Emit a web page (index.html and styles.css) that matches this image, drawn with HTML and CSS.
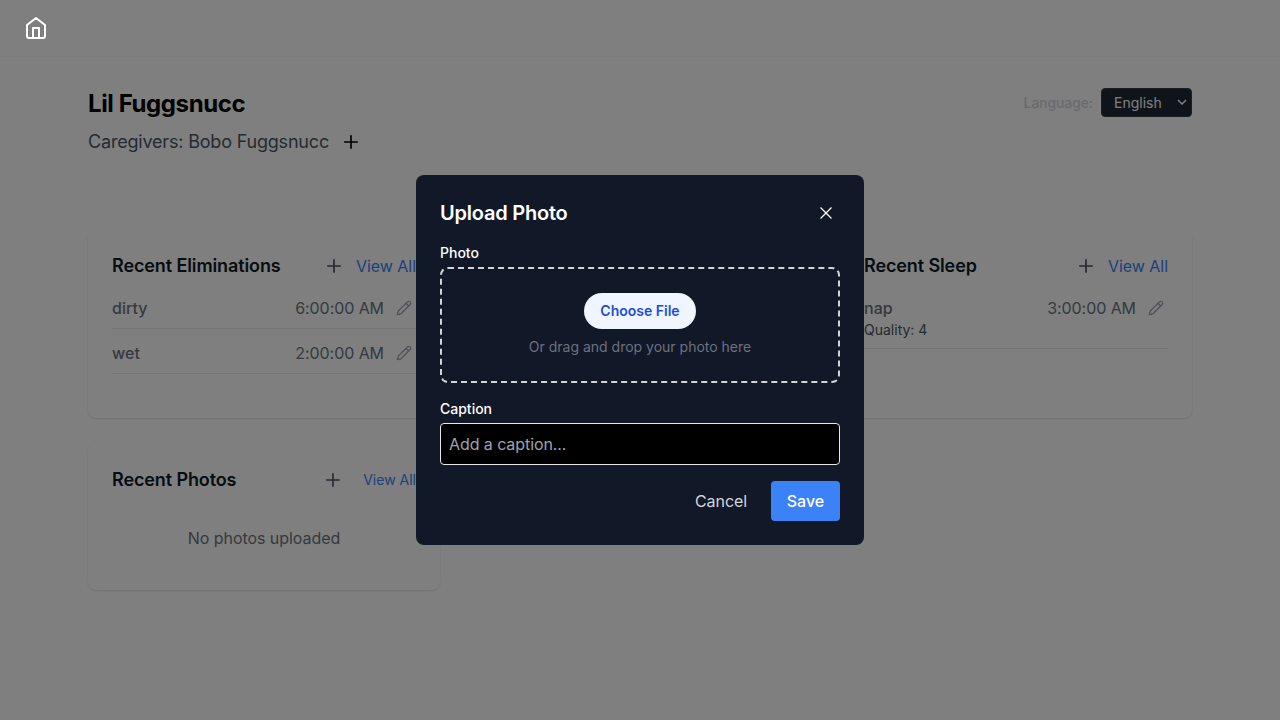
FILE: index.html
```html
<!DOCTYPE html>
<html lang="en">
<head>
<meta charset="utf-8">
<title>Lil Fuggsnucc</title>
<link rel="stylesheet" href="styles.css">
</head>
<body>
<svg width="0" height="0" class="defs">
  <symbol id="plus" viewBox="0 0 24 24"><path d="M4.5 12h15M12 4.5v15"/></symbol>
  <symbol id="pencil" viewBox="0 0 24 24"><path d="M21.174 6.812a1 1 0 0 0-3.986-3.987L3.842 16.174a2 2 0 0 0-.5.83l-1.321 4.352a.5.5 0 0 0 .623.622l4.353-1.32a2 2 0 0 0 .83-.497zM15 5l4 4"/></symbol>
</svg>
<header class="topbar"></header>
<main class="page">
  <div class="head">
    <div>
      <h1>Lil Fuggsnucc</h1>
      <p class="care"><span>Caregivers: Bobo Fuggsnucc</span> <svg class="icon i20 black"><use href="#plus"/></svg></p>
    </div>
    <div class="lang"><span>Language:</span>
      <div class="select">English <svg class="chev" viewBox="0 0 10 6"><path d="M1 1l4 4 4-4"/></svg></div>
    </div>
  </div>
  <div class="grid">
    <section class="card">
      <div class="card-head"><h2>Recent Eliminations</h2><div class="actions"><svg class="icon i20"><use href="#plus"/></svg><a>View All</a></div></div>
      <div class="row"><span class="kind">dirty</span><div class="when">6:00:00 AM <svg class="icon i16"><use href="#pencil"/></svg></div></div>
      <div class="row"><span class="kind">wet</span><div class="when">2:00:00 AM <svg class="icon i16"><use href="#pencil"/></svg></div></div>
    </section>
    <section class="card"></section>
    <section class="card">
      <div class="card-head"><h2>Recent Sleep</h2><div class="actions"><svg class="icon i20"><use href="#plus"/></svg><a>View All</a></div></div>
      <div class="row"><div><span class="kind">nap</span><p class="quality">Quality: 4</p></div><div class="when">3:00:00 AM <svg class="icon i16"><use href="#pencil"/></svg></div></div>
    </section>
    <section class="card photos">
      <div class="card-head"><h2>Recent Photos</h2><div class="actions"><svg class="icon i20"><use href="#plus"/></svg><a>View All</a></div></div>
      <p class="empty">No photos uploaded</p>
    </section>
  </div>
</main>
<div class="overlay">
  <div class="modal">
    <div class="modal-head"><h3>Upload Photo</h3><svg class="close" viewBox="0 0 12 12"><path d="M.5.5l11 11M11.5.5l-11 11"/></svg></div>
    <div class="label">Photo</div>
    <div class="drop"><button class="choose">Choose File</button><p>Or drag and drop your photo here</p></div>
    <div class="label caption">Caption</div>
    <input class="input" placeholder="Add a caption...">
    <div class="buttons"><button class="cancel">Cancel</button><button class="save">Save</button></div>
  </div>
</div>
<a class="home"><svg class="icon i24" viewBox="0 0 24 24"><path d="M3 9 12 2l9 7v11a2 2 0 0 1-2 2H5a2 2 0 0 1-2-2zM9 22V12h6v10"/></svg></a>
</body>
</html>
```
FILE: styles.css
```css
* { box-sizing: border-box; margin: 0; }
body { font: 16px/24px Inter, sans-serif; background: #fff; height: 720px; overflow: hidden; }
button, input { font: inherit; border: 0; }
.defs { position: absolute; }
.icon { fill: none; stroke: currentColor; stroke-width: 2; stroke-linecap: round; stroke-linejoin: round; flex: none; }
.i16 { width: 16px; height: 16px; }
.i20 { width: 20px; height: 20px; }
.i24 { width: 24px; height: 24px; }
.black { color: #000; }
.topbar { height: 57px; border-bottom: 1px solid #f6f7f8; }
.home { position: absolute; left: 24px; top: 16px; height: 24px; color: #fff; z-index: 3; }
.page { width: 1104px; margin: 31px auto 0; }
.head { display: flex; justify-content: space-between; align-items: flex-start; height: 142px; }
h1 { font-size: 24px; line-height: 32px; font-weight: 700; letter-spacing: -0.4px; }
.care { display: flex; align-items: center; gap: 12px; margin-top: 8px; font-size: 18px; line-height: 28px; color: #4b5563; }
.care span { letter-spacing: -0.19px; }
.lang { display: flex; align-items: center; gap: 8px; font-size: 14px; line-height: 20px; color: #d1d5db; }
.lang > span { font-weight: 500; letter-spacing: -0.1px; }
.select { display: flex; align-items: center; justify-content: space-between; width: 91px; height: 29px; padding: 0 4px 0 12px; background: #1f2937; border: 1px solid #374151; border-radius: 4px; color: #fff; }
.chev { width: 10px; height: 6px; margin-top: -1px; fill: none; stroke: #fff; stroke-width: 1.5; }
.grid { display: grid; grid-template-columns: repeat(3, 352px); gap: 24px; }
.card { height: 188px; padding: 24px; border-radius: 8px; background: #fff; box-shadow: 0 1px 3px rgba(0,0,0,.1), 0 1px 2px -1px rgba(0,0,0,.1); }
.card-head { display: flex; justify-content: space-between; align-items: center; height: 24px; margin-bottom: 18px; }
h2 { font-size: 18px; line-height: 24px; font-weight: 600; letter-spacing: -0.11px; color: #111827; }
.actions { display: flex; align-items: center; gap: 12px; color: #4b5563; }
.actions a { color: #3b82f6; letter-spacing: -0.04px; }
.row { display: flex; justify-content: space-between; align-items: flex-start; padding-bottom: 8px; margin-bottom: 12px; border-bottom: 1px solid #e5e7eb; }
.kind { display: block; font-weight: 500; color: #6b7280; }
.when { display: flex; align-items: center; gap: 12px; padding-right: 4px; color: #6b7280; letter-spacing: -0.07px; }
.when .icon { color: #9ca3af; stroke-width: 2; }
.quality { font-size: 14px; line-height: 20px; color: #4b5563; }
.photos { height: 148px; padding-top: 26px; }
.photos .actions { gap: 20px; }
.photos .actions a { font-size: 14px; letter-spacing: 0; }
.empty { margin-top: 34px; text-align: center; color: #6b7280; letter-spacing: -0.06px; }
.overlay { position: fixed; inset: 0; display: flex; align-items: center; justify-content: center; background: rgba(0,0,0,.5); }
.modal { width: 448px; height: 370px; padding: 24px; border-radius: 8px; background: #111827; color: #fff; }
.modal-head { display: flex; align-items: center; justify-content: space-between; height: 28px; padding-right: 8px; margin-bottom: 16px; }
h3 { font-size: 20px; line-height: 28px; font-weight: 600; letter-spacing: -0.22px; }
.close { width: 12px; height: 12px; fill: none; stroke: #fff; stroke-width: 1.3; overflow: visible; }
.label { font-size: 14px; line-height: 20px; font-weight: 500; margin-bottom: 4px; }
.drop { display: flex; flex-direction: column; align-items: center; gap: 8px; height: 116px; padding-top: 24px; border: 2px dashed #d1d5db; border-radius: 8px; font-size: 14px; line-height: 20px; color: #6b7280; }
.choose { width: 112px; height: 36px; padding: 0; border-radius: 18px; background: #eff6ff; color: #1d4ed8; font-weight: 600; }
.caption { margin-top: 16px; }
.input { display: block; width: 400px; height: 42px; padding: 8px; border: 1px solid #e5e7eb; border-radius: 4px; background: #000; letter-spacing: -0.08px; }
.input::placeholder { color: #9ca3af; }
.buttons { display: flex; justify-content: flex-end; gap: 8px; margin-top: 16px; }
.buttons button { height: 40px; padding: 0 16px; border-radius: 4px; }
.cancel { background: none; color: #d1d5db; letter-spacing: -0.08px; }
.buttons .save { width: 69px; padding: 0; background: #3b82f6; color: #fff; font-weight: 450; }
```
